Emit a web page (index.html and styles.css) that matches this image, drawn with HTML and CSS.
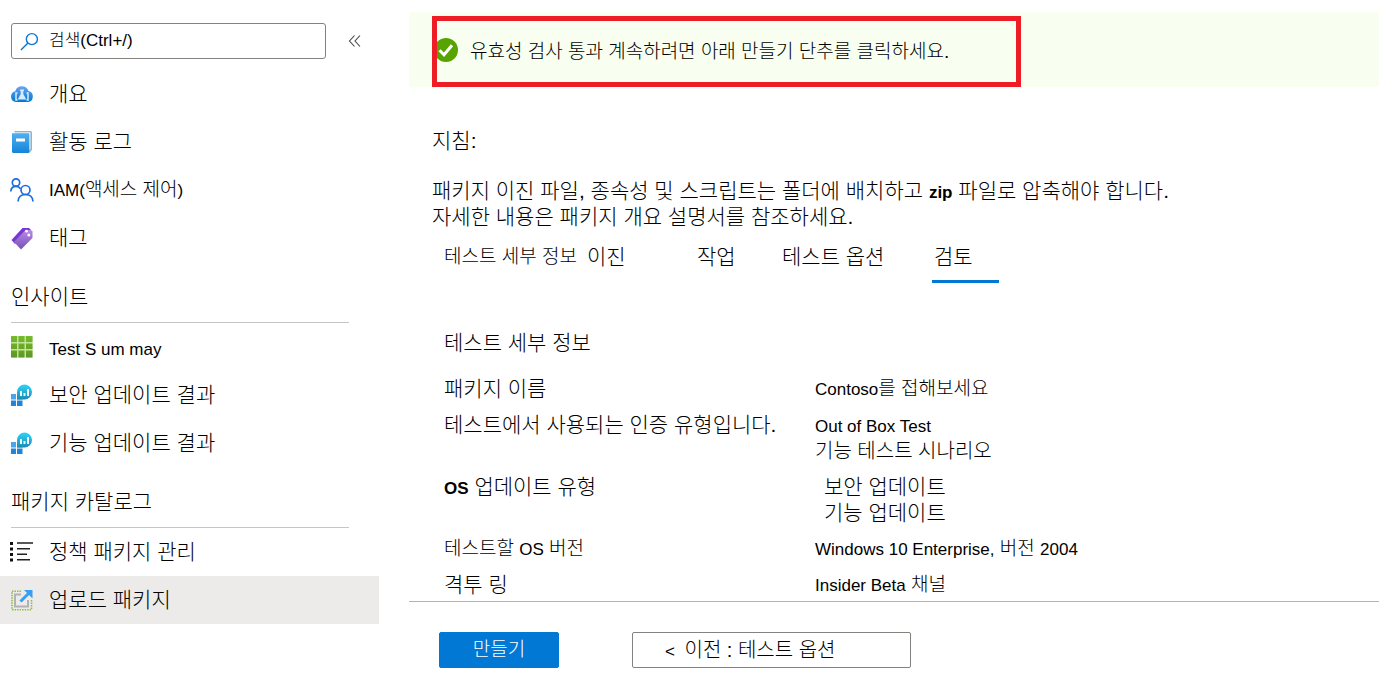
FILE: index.html
```html
<!DOCTYPE html>
<html lang="ko">
<head>
<meta charset="utf-8">
<meta name="viewport" content="width=device-width, initial-scale=1">
<title>업로드 패키지</title>
<link rel="stylesheet" href="styles.css">
</head>
<body>
<svg class="defs" aria-hidden="true">
  <defs>
    <linearGradient id="sky" x1="0" y1="0" x2="0" y2="1"><stop offset="0" stop-color="#6aa5f0"/><stop offset="1" stop-color="#0078d4"/></linearGradient>
    <linearGradient id="book" x1="0" y1="0" x2="0" y2="1"><stop offset="0" stop-color="#50b0f0"/><stop offset="1" stop-color="#1484d8"/></linearGradient>
    <linearGradient id="tag" x1="0" y1="0" x2="0" y2="1"><stop offset="0" stop-color="#b78ae4"/><stop offset="1" stop-color="#7a4fb8"/></linearGradient>
    <linearGradient id="green" x1="0" y1="0" x2="0" y2="1"><stop offset="0" stop-color="#76bc2d"/><stop offset="1" stop-color="#5e9624"/></linearGradient>
    <linearGradient id="cyan" x1="0" y1="0" x2="0" y2="1"><stop offset="0" stop-color="#32d4f5"/><stop offset="1" stop-color="#198ab3"/></linearGradient>
    <symbol id="result" viewBox="0 0 24 24">
      <path fill="#4aa3ec" d="M1 11h5v5.500H1z"/><path fill="#1f85d8" d="M1 17.500h5V23H1zM7 17.500h5.500V23H7z"/><path fill="#3797e4" d="M7 14h5.500v2.500H7z"/>
      <path fill="url(#cyan)" d="M14.500 1.500a7.500 7.500 0 1 1 0 15H7V9a7.500 7.500 0 0 1 7.500-7.500z"/>
      <path fill="#e8faff" d="M10 8h2v5h-2zM13.500 10h2v3h-2zM17 6h2v7h-2z"/>
    </symbol>
  </defs>
</svg>
<div class="app">
  <aside class="sidebar">
    <div class="search-row">
      <label class="search">
        <svg class="search-icon" viewBox="0 0 20 20" aria-hidden="true"><circle cx="12.500" cy="7.500" r="5.800"/><path d="M8.400 11.600L1 19"/></svg>
        <input type="text" value="검색(Ctrl+/)" aria-label="검색">
      </label>
      <button class="collapse" type="button" aria-label="메뉴 접기"><svg viewBox="0 0 14 14" aria-hidden="true"><path d="M6.500 1.500L1.500 7l5 5.500M12 1.500L7 7l5 5.500"/></svg></button>
    </div>
    <nav>
      <a class="item" href="#overview">
        <svg class="icon" viewBox="0 0 24 24" aria-hidden="true"><path fill="url(#sky)" d="M6 20a5.500 5.500 0 0 1-.8-10.800A7 7 0 0 1 18.500 9a5.600 5.600 0 0 1-.5 11z"/><path fill="none" stroke="#d5ebff" stroke-width="1.500" d="M7.500 11H6v7h1.500M16.500 11H18v7h-1.500"/><path fill="#d5ebff" d="M10 7.500h4V9h-.7v3l3 5.500H7.700l3-5.500V9H10z"/></svg>
        <span>개요</span></a>
      <a class="item" href="#activity">
        <svg class="icon" viewBox="0 0 24 24" aria-hidden="true"><path fill="#8fb4cf" d="M4 1h16.500a1.500 1.500 0 0 1 1.500 1.500v17L19.500 23z"/><path fill="#e4eff7" d="M5 2.200h15.500v17L19 20z"/><path fill="url(#book)" d="M2 3.200h16a1.300 1.300 0 0 1 1.300 1.300V21.700A1.300 1.300 0 0 1 18 23H3.500A1.500 1.500 0 0 1 2 21.500z"/><path fill="#fff" d="M6 8.500h9v3H6z"/></svg>
        <span>활동 로그</span></a>
      <a class="item" href="#iam">
        <svg class="icon" viewBox="0 0 24 24" fill="none" stroke="#1a6fe0" stroke-width="1.700" aria-hidden="true"><circle cx="6" cy="4.500" r="3.700"/><circle cx="15.500" cy="12" r="4.500"/><path d="M.8 13.500C1 10 3 8.300 6 8.300c2 0 3.500.8 4.500 2.400M8 23.500c.3-4.500 3-7 7.500-7s7.200 2.500 7.500 7"/></svg>
        <span class="small"><span class="latin">IAM(</span>액세스 제어<span class="latin">)</span></span></a>
      <a class="item" href="#tags">
        <svg class="icon" viewBox="0 0 24 24" aria-hidden="true"><path fill="#7637d5" d="M12.500 2h6.500l2 2L5 18 1.500 14z"/><path fill="url(#tag)" d="M15.500 4H21l1.500 1.500v6.500L11 23.500 4 16z"/><circle cx="16.500" cy="5.200" r="1.400" fill="#fff"/><circle cx="18.800" cy="9" r="1.500" fill="#fff"/></svg>
        <span>태그</span></a>
      <h2 class="group">인사이트</h2>
      <a class="item" href="#summary">
        <svg class="icon" viewBox="0 0 24 24" aria-hidden="true"><path fill="#c3e39b" d="M1 1h21.500v21.500H1z"/><path fill="url(#green)" d="M1 1h6v6H1zM8.500 1h6v6h-6zM16 1h6.500v6H16zM1 8.500h6v5.500H1zM8.500 8.500h6v5.500h-6zM16 8.500h6.500v5.500H16zM1 15.500h6v7H1zM8.500 15.500h6v7h-6zM16 15.500h6.500v7H16z"/></svg>
        <span class="latin">Test S um may</span></a>
      <a class="item" href="#security"><svg class="icon" aria-hidden="true"><use href="#result"/></svg><span>보안 업데이트 결과</span></a>
      <a class="item" href="#feature"><svg class="icon" aria-hidden="true"><use href="#result"/></svg><span>기능 업데이트 결과</span></a>
      <h2 class="group">패키지 카탈로그</h2>
      <a class="item" href="#manage">
        <svg class="icon" viewBox="0 0 24 24" aria-hidden="true"><path fill="#111" d="M0 2h3v3H0zM0 7.500h3v3H0zM0 13h3v3H0zM0 18.500h3v3H0z"/><path stroke="#222" stroke-width="1.400" d="M7 3h16M7 8.700h13M7 14.300h10M7 19.700h13"/></svg>
        <span>정책 패키지 관리</span></a>
      <a class="item selected" href="#upload" aria-current="page">
        <svg class="icon" viewBox="0 0 24 24" fill="none" aria-hidden="true"><path stroke="#86c440" stroke-width="1.600" stroke-dasharray="1.500 1" d="M11 3.300H2v18.400h19.500V12"/><path stroke="#b2b2b2" stroke-width="2" d="M11 6.500H5v12h13V12"/><path stroke="#36a0f0" stroke-width="3" d="M10.500 13.500l8-8"/><path fill="#36a0f0" d="M14 2h8.500v8.500z"/></svg>
        <span>업로드 패키지</span></a>
    </nav>
  </aside>
  <main class="main">
    <div class="alert" role="status">
      <svg class="check" viewBox="0 0 24 24" aria-hidden="true"><circle cx="12" cy="12" r="12" fill="#57a300"/><path fill="none" stroke="#fff" stroke-width="3" d="M5.500 12.200l4.500 4.600L18 7.200"/></svg>
      <span class="alert-text">유효성 검사 통과 계속하려면 아래 만들기 단추를 클릭하세요.</span>
      <div class="highlight"></div>
    </div>
    <section class="intro">
      <h1>지침:</h1>
      <p>패키지 이진 파일, 종속성 및 스크립트는 폴더에 배치하고 <b class="latin">zip</b> 파일로 압축해야 합니다.<br>자세한 내용은 패키지 개요 설명서를 참조하세요.</p>
    </section>
    <div class="tabs" role="tablist">
      <button type="button" role="tab" class="small">테스트 세부 정보</button>
      <button type="button" role="tab">이진</button>
      <button type="button" role="tab">작업</button>
      <button type="button" role="tab">테스트 옵션</button>
      <button type="button" role="tab" class="active" aria-selected="true">검토</button>
    </div>
    <section class="details">
      <h2>테스트 세부 정보</h2>
      <dl>
        <dt>패키지 이름</dt>
        <dd><span class="latin">Contoso</span>를 접해보세요</dd>
        <dt>테스트에서 사용되는 인증 유형입니다.</dt>
        <dd class="medium"><span class="latin">Out of Box Test</span><br>기능 테스트 시나리오</dd>
        <dt><b class="latin">OS</b> 업데이트 유형</dt>
        <dd class="updates">보안 업데이트<br>기능 업데이트</dd>
        <dt class="small">테스트할 <span class="latin">OS</span> 버전</dt>
        <dd><span class="latin">Windows 10 Enterprise,</span> 버전 <span class="latin">2004</span></dd>
        <dt>격투 링</dt>
        <dd><span class="latin">Insider Beta</span> 채널</dd>
      </dl>
    </section>
    <footer class="actions">
      <button type="button" class="btn primary">만들기</button>
      <button type="button" class="btn secondary"><span class="latin">&lt;</span> 이전 : 테스트 옵션</button>
    </footer>
  </main>
</div>
</body>
</html>
```

FILE: styles.css
```css
* { box-sizing: border-box; }

body {
  margin: 0;
  background: #fff;
  color: #000;
  font: 300 21px/26px "Liberation Sans", "Noto Sans CJK KR", sans-serif;
}

h1, h2, p, dl, dd { margin: 0; font: inherit; }
button, input { font: inherit; color: inherit; }
a { color: inherit; text-decoration: none; }

.defs { position: absolute; width: 0; height: 0; }
.small { font-size: 19px; }
.latin { font-size: 17px; line-height: 1; }
b.latin { font-weight: 700; }

.app { display: flex; min-height: 100vh; }

.sidebar { flex: 0 0 379px; padding-top: 23px; }
.search-row { display: flex; align-items: center; gap: 20px; padding: 0 11px; margin-bottom: 11px; }
.search {
  display: flex;
  align-items: center;
  gap: 10px;
  width: 315px;
  height: 36px;
  padding: 0 8px;
  border: 1px solid #84827f;
  border-radius: 3px;
}
.search-icon { width: 19px; height: 19px; fill: none; stroke: #0f78d4; stroke-width: 1.5; }
.search input { flex: 1; min-width: 0; padding: 0; border: 0; outline: 0; background: none; font-size: 17px; }
.collapse { padding: 0; border: 0; background: none; width: 18px; height: 18px; display: grid; place-items: center; }
.collapse svg { width: 14px; height: 14px; fill: none; stroke: #444; stroke-width: 1.1; }

.item { display: flex; align-items: center; gap: 15px; height: 48px; padding: 0 10px; }
.item > .latin { padding-top: 4px; }
.icon { flex: none; width: 24px; height: 24px; }
.selected { background: #edebe9; }
.group { margin: 0 30px 0 11px; padding: 22px 0 12px; border-bottom: 1px solid #c8c6c4; }

.main { flex: 1; min-width: 0; display: flex; flex-direction: column; padding: 12px 0 17px; margin-left: 30px; }
.alert {
  position: relative;
  display: flex;
  align-items: center;
  gap: 12px;
  min-height: 75px;
  padding: 0 25px;
  background: #f8fff0;
  border-radius: 2px;
  font-size: 19px;
}
.alert-text { padding-top: 4px; }
.check { flex: none; width: 24px; height: 24px; }
.highlight { position: absolute; left: 23px; top: 4px; width: 589px; height: 71px; border: 5px solid #ee1c25; }

.intro { padding: 41px 23px 0; }
.intro h1 { margin-bottom: 24px; }

.tabs { display: grid; grid-template-columns: 143px 110px 85px 150px 67px; padding: 14px 35px 0; }
.tabs button {
  height: 39px;
  padding: 0 0 13px;
  border: 0;
  border-bottom: 3px solid transparent;
  background: none;
  text-align: left;
  white-space: nowrap;
}
.tabs .active { padding-left: 2px; border-color: #0078d4; }

.details { padding: 47px 35px 3px; }
.details dl { display: grid; grid-template-columns: 371px 1fr; row-gap: 10px; margin-top: 20px; }
.details dd { font-size: 19px; }
.details .medium { font-size: 20px; }
.details .updates { padding-left: 9px; font-size: 21px; }

.actions { display: flex; gap: 73px; padding: 30px 30px 0; border-top: 1px solid #b3b3b3; }
.btn { height: 36px; padding: 0 32px; border-radius: 2px; }
.primary { width: 120px; border: 1px solid #0078d4; background: #0078d4; color: #fff; font-size: 19px; }
.secondary { width: 279px; border: 1px solid #84827f; background: #fff; text-align: left; font-size: 20px; }
.secondary .latin { padding-right: 4px; }
```
